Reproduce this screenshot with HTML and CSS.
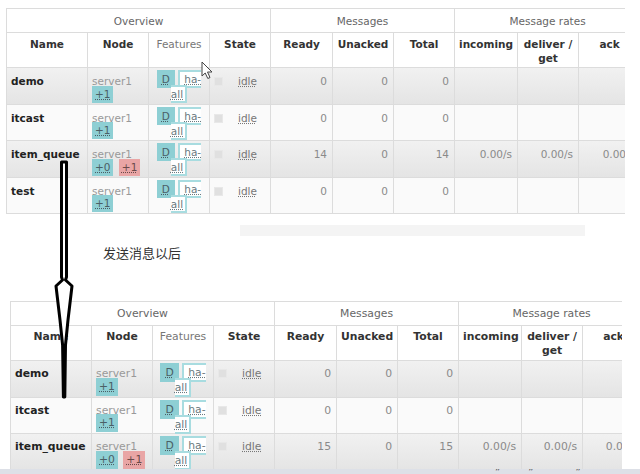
FILE: index.html
```html
<!DOCTYPE html>
<html lang="zh">
<head>
<meta charset="utf-8">
<title>Queues</title>
<link rel="stylesheet" href="styles.css">
</head>
<body>
<div class="page">
  <div class="shot shot-top">
    <table class="queues">
      <colgroup>
        <col class="w-name"><col class="w-node"><col class="w-feat"><col class="w-state"><col class="w-ready"><col class="w-unacked"><col class="w-total"><col class="w-in"><col class="w-deliver"><col class="w-ack">
      </colgroup>
      <thead>
        <tr class="group"><th colspan="4">Overview</th><th colspan="3">Messages</th><th colspan="3">Message rates</th></tr>
        <tr class="cols"><th>Name</th><th>Node</th><th class="plain">Features</th><th>State</th><th>Ready</th><th>Unacked</th><th>Total</th><th>incoming</th><th>deliver / get</th><th>ack</th></tr>
      </thead>
      <tbody>
        <tr class="alt">
          <td class="name">demo</td>
          <td class="node">server1<br><span class="mirror">+1</span></td>
          <td class="feat"><span class="durable">D</span> <span class="policy">ha-<br>all</span></td>
          <td class="state"><span class="sq"></span><span class="idle">idle</span></td>
          <td class="num">0</td><td class="num">0</td><td class="num">0</td>
          <td class="num"></td><td class="num"></td><td class="num"></td>
        </tr>
        <tr>
          <td class="name">itcast</td>
          <td class="node">server1<br><span class="mirror">+1</span></td>
          <td class="feat"><span class="durable">D</span> <span class="policy">ha-<br>all</span></td>
          <td class="state"><span class="sq"></span><span class="idle">idle</span></td>
          <td class="num">0</td><td class="num">0</td><td class="num">0</td>
          <td class="num"></td><td class="num"></td><td class="num"></td>
        </tr>
        <tr class="alt">
          <td class="name">item_queue</td>
          <td class="node">server1<br><span class="mirror">+0</span> <span class="mirror unsynced">+1</span></td>
          <td class="feat"><span class="durable">D</span> <span class="policy">ha-<br>all</span></td>
          <td class="state"><span class="sq"></span><span class="idle">idle</span></td>
          <td class="num">14</td><td class="num">0</td><td class="num">14</td>
          <td class="num">0.00/s</td><td class="num">0.00/s</td><td class="num">0.00/s</td>
        </tr>
        <tr>
          <td class="name">test</td>
          <td class="node">server1<br><span class="mirror">+1</span></td>
          <td class="feat"><span class="durable">D</span> <span class="policy">ha-<br>all</span></td>
          <td class="state"><span class="sq"></span><span class="idle">idle</span></td>
          <td class="num">0</td><td class="num">0</td><td class="num">0</td>
          <td class="num"></td><td class="num"></td><td class="num"></td>
        </tr>
      </tbody>
    </table>
  </div>

  <div class="between">
    <div class="faint-bar"></div>
    <p class="caption">发送消息以后</p>
  </div>

  <div class="shot shot-bottom">
    <table class="queues queues-lg">
      <colgroup>
        <col class="w-name"><col class="w-node"><col class="w-feat"><col class="w-state"><col class="w-ready"><col class="w-unacked"><col class="w-total"><col class="w-in"><col class="w-deliver"><col class="w-ack">
      </colgroup>
      <thead>
        <tr class="group"><th colspan="4">Overview</th><th colspan="3">Messages</th><th colspan="3">Message rates</th></tr>
        <tr class="cols"><th>Name</th><th>Node</th><th class="plain">Features</th><th>State</th><th>Ready</th><th>Unacked</th><th>Total</th><th>incoming</th><th>deliver / get</th><th>ack</th></tr>
      </thead>
      <tbody>
        <tr class="alt">
          <td class="name">demo</td>
          <td class="node">server1<br><span class="mirror">+1</span></td>
          <td class="feat"><span class="durable">D</span> <span class="policy">ha-<br>all</span></td>
          <td class="state"><span class="sq"></span><span class="idle">idle</span></td>
          <td class="num">0</td><td class="num">0</td><td class="num">0</td>
          <td class="num"></td><td class="num"></td><td class="num"></td>
        </tr>
        <tr>
          <td class="name">itcast</td>
          <td class="node">server1<br><span class="mirror">+1</span></td>
          <td class="feat"><span class="durable">D</span> <span class="policy">ha-<br>all</span></td>
          <td class="state"><span class="sq"></span><span class="idle">idle</span></td>
          <td class="num">0</td><td class="num">0</td><td class="num">0</td>
          <td class="num"></td><td class="num"></td><td class="num"></td>
        </tr>
        <tr class="alt">
          <td class="name">item_queue</td>
          <td class="node">server1<br><span class="mirror">+0</span> <span class="mirror unsynced">+1</span></td>
          <td class="feat"><span class="durable">D</span> <span class="policy">ha-<br>all</span></td>
          <td class="state"><span class="sq"></span><span class="idle">idle</span></td>
          <td class="num">15</td><td class="num">0</td><td class="num">15</td>
          <td class="num">0.00/s</td><td class="num">0.00/s</td><td class="num">0.00/s</td>
        </tr>
      </tbody>
    </table>
  </div>

  <div class="taskbar"><span class="mark">”</span><span class="mark">”</span><span class="mark">”</span></div>

  <svg class="overlay" viewBox="0 0 640 474" width="640" height="474" aria-hidden="true">
    <path class="hand-arrow" d="M61.5 162 L66.5 162 L66.5 277 L65.5 280 L72 286 L68 320 L65.5 345 L64.8 397 L63.4 397 L62.6 345 L60 320 L56 286 L62.5 280 L61.5 277 Z"/>
    <path class="cursor" d="M202 62 L202 76 L205.2 73 L207.8 78.5 L210 77.5 L207.5 72 L212 72 Z"/>
  </svg>
</div>
</body>
</html>
```

FILE: styles.css
```css
* { box-sizing: border-box; }

html, body {
  margin: 0;
  padding: 0;
  background: #fff;
}

body {
  width: 640px;
  height: 474px;
  overflow: hidden;
  font-family: "DejaVu Sans", Verdana, sans-serif;
}

.page {
  position: relative;
  width: 640px;
  height: 474px;
}

.shot { overflow: hidden; }

.shot-top {
  margin-left: 6px;
  padding-top: 8px;
  width: 619px;
}

.shot-bottom {
  margin-left: 10px;
  width: 612px;
  height: 168px;
}

.queues {
  border-collapse: collapse;
  table-layout: fixed;
  width: 634px;
  font-size: 10.5px;
  line-height: 14px;
  color: #8a8a8a;
}

.queues-lg { font-size: 10.8px; }

.w-name { width: 81px; }
.w-node { width: 61px; }
.w-feat { width: 61px; }
.w-state { width: 61px; }
.w-ready { width: 62px; }
.w-unacked { width: 61px; }
.w-total { width: 61px; }
.w-in { width: 63px; }
.w-deliver { width: 61px; }
.w-ack { width: 62px; }

.queues th,
.queues td {
  border: 1px solid #dcdcdc;
  padding: 0 4px;
  vertical-align: top;
  white-space: normal;
}

.queues .group th {
  height: 24px;
  font-weight: normal;
  color: #666;
  text-align: center;
  vertical-align: middle;
  background: #fff;
}

.queues .cols th {
  height: 35px;
  padding-top: 4px;
  color: #333;
  font-weight: bold;
  text-align: center;
  background: #fff;
}

.queues .cols th.plain {
  font-weight: normal;
  color: #777;
}

.queues tbody tr {
  height: 36.5px;
  background: #fafafa;
}

.queues tbody tr.alt {
  background: linear-gradient(#f1f1f1, #e4e4e4);
}

.queues tbody td {
  padding-top: 7px;
  line-height: 12.5px;
}

.queues td.name {
  font-weight: bold;
  color: #222;
}

.queues td.node { color: #999; }

.queues td.num {
  text-align: right;
  padding-right: 5px;
}

.mirror {
  padding: 2px 3px 3px;
  background: #8ecfd4;
  color: #4b5f66;
  text-decoration: underline dotted;
}

.mirror.unsynced {
  margin-left: 2px;
  background: #e9a5a5;
  color: #6a4a4a;
}

.queues td.feat {
  text-align: center;
  padding-top: 4px;
  line-height: 15px;
}

.durable {
  padding: 3px 5px 3px;
  background: #8ecfd4;
  color: #4b5f66;
  text-decoration: underline dotted;
}

.policy {
  padding: 1px 2px 1px 4px;
  border: 2px solid #a8dce0;
  background: #fff;
  color: #6a7a80;
  text-decoration: underline dotted;
}

.queues td.state { padding-left: 4px; }

.sq {
  display: inline-block;
  width: 9px;
  height: 9px;
  margin: 0 15px -1px 0;
  background: #e0e0e0;
  border: 1px solid #e8e8e8;
}

.idle {
  color: #777;
  text-decoration: underline dotted;
}

.between {
  height: 87px;
  padding-top: 11px;
}

.faint-bar {
  margin-left: 240px;
  width: 345px;
  height: 11px;
  background: #f4f4f4;
}

.caption {
  margin: 10px 0 0 103px;
  font-family: "Noto Sans CJK SC", sans-serif;
  font-size: 13px;
  line-height: 14px;
  color: #333;
}

.taskbar {
  display: flex;
  height: 6px;
  overflow: hidden;
  background: #dde0e7;
  padding-left: 495px;
  gap: 28px;
}

.mark {
  font-size: 10px;
  line-height: 8px;
  color: #555;
}

.mark:last-child { margin-left: 14px; }

.overlay {
  position: absolute;
  left: 0;
  top: 0;
  pointer-events: none;
}

.hand-arrow {
  fill: #fff;
  stroke: #000;
  stroke-width: 3;
  stroke-linejoin: round;
}

.cursor {
  fill: #fff;
  stroke: #444;
  stroke-width: 1;
  stroke-linejoin: round;
}
```
